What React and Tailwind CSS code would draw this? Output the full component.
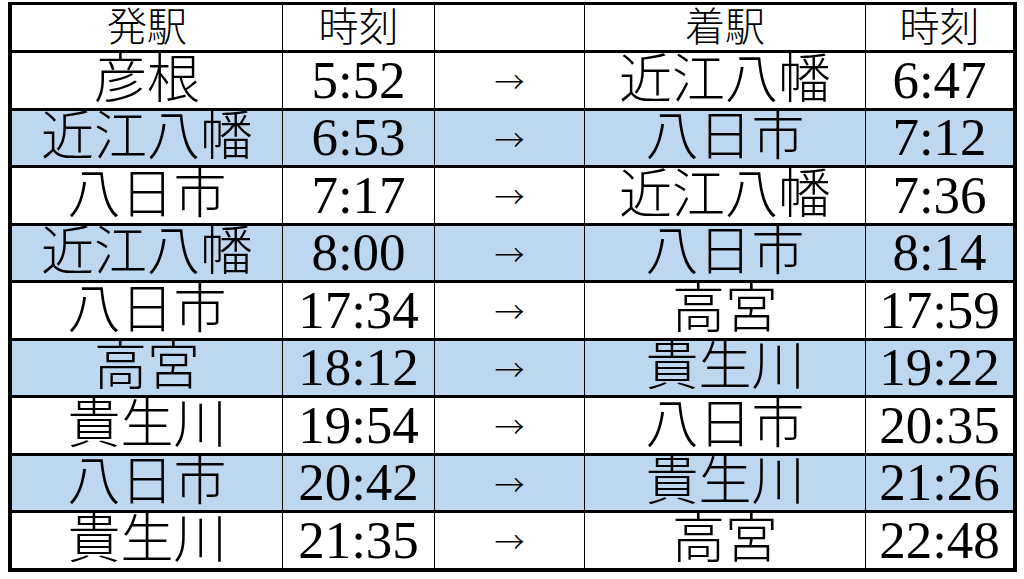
import React from 'react';

const rows = [
  ['彦根', '5:52', '近江八幡', '6:47'],
  ['近江八幡', '6:53', '八日市', '7:12'],
  ['八日市', '7:17', '近江八幡', '7:36'],
  ['近江八幡', '8:00', '八日市', '8:14'],
  ['八日市', '17:34', '高宮', '17:59'],
  ['高宮', '18:12', '貴生川', '19:22'],
  ['貴生川', '19:54', '八日市', '20:35'],
  ['八日市', '20:42', '貴生川', '21:26'],
  ['貴生川', '21:35', '高宮', '22:48'],
];

const font = { fontFamily: "'Liberation Serif', 'Noto Sans CJK JP', serif" };
const cjk = { fontFamily: "'Noto Sans CJK JP', sans-serif" };

export default function App() {
  return (
    <div className="min-h-screen bg-white pt-[2px] pl-[8px]" style={font}>
      <div className="w-[1009px] border-x-4 border-t-[3px] border-b-4 border-black text-black">
        <div className="grid h-[48px] grid-cols-[271px_152px_150px_281px_147px] border-b-[3px] border-black bg-white text-[40px] font-light leading-none">
          <div className="flex items-center justify-center border-r-[1.5px] border-black">発駅</div>
          <div className="flex items-center justify-center border-r-[1.5px] border-black">時刻</div>
          <div className="border-r-[1.5px] border-black"></div>
          <div className="flex items-center justify-center border-r-[1.5px] border-black">着駅</div>
          <div className="flex items-center justify-center">時刻</div>
        </div>
        {rows.map((r, i) => (
          <div
            key={i}
            className={`grid grid-cols-[271px_152px_150px_281px_147px] border-black leading-none ${
              i % 2 === 1 ? 'bg-[#bdd7ee]' : 'bg-white'
            } ${i < rows.length - 1 ? 'h-[57.5px] border-b-[3px]' : 'h-[54.5px]'}`}
          >
            <div className="flex items-center justify-center border-r-[1.5px] border-black text-[53px] font-light">{r[0]}</div>
            <div className="flex items-center justify-center border-r-[1.5px] border-black text-[53px]">{r[1]}</div>
            <div className="flex items-center justify-center border-r-[1.5px] border-black text-[30px] font-light" style={cjk}>→</div>
            <div className="flex items-center justify-center border-r-[1.5px] border-black text-[53px] font-light">{r[2]}</div>
            <div className="flex items-center justify-center text-[53px]">{r[3]}</div>
          </div>
        ))}
      </div>
    </div>
  );
}
